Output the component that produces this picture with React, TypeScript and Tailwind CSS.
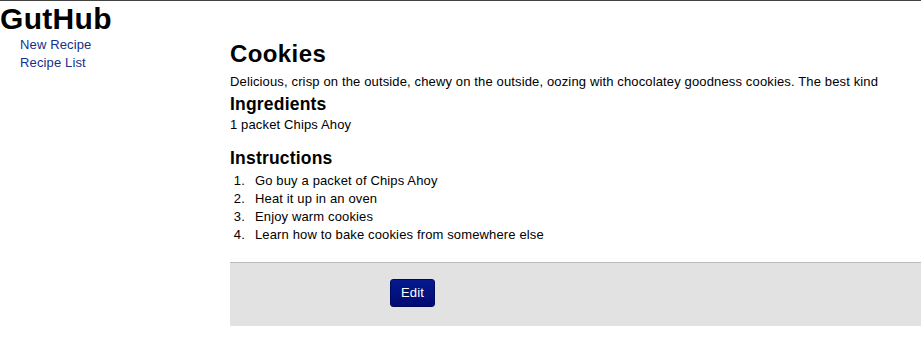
export default function App() {
  const steps = [
    'Go buy a packet of Chips Ahoy',
    'Heat it up in an oven',
    'Enjoy warm cookies',
    'Learn how to bake cookies from somewhere else',
  ];

  return (
    <div className="min-h-screen bg-white border-t border-[#444] font-['Liberation_Sans',Arial,sans-serif] text-[13px] tracking-[0.14px] text-black">
      <h1 className="text-[30px] font-bold leading-[35px] tracking-[0.3px]">GutHub</h1>

      <div className="flex">
        {/* sidebar */}
        <ul className="w-[230px] shrink-0 pl-[20px]">
          <li className="leading-[18px]">
            <a href="#" className="text-[#14308a]">New Recipe</a>
          </li>
          <li className="leading-[18px]">
            <a href="#" className="text-[#14308a]">Recipe List</a>
          </li>
        </ul>

        {/* recipe */}
        <div className="flex-1">
          <h2 className="mt-[4px] text-[24px] font-bold leading-[28px] tracking-[0.4px]">Cookies</h2>
          <p className="mt-[5px] leading-[18px]">
            Delicious, crisp on the outside, chewy on the outside, oozing with chocolatey goodness cookies. The best kind
          </p>

          <h3 className="mt-[2px] text-[17.5px] font-bold leading-[23px] tracking-[0.2px]">Ingredients</h3>
          <ul className="leading-[18px]">
            <li>1 packet Chips Ahoy</li>
          </ul>

          <h3 className="mt-[13px] text-[17.5px] font-bold leading-[23px] tracking-[0.2px]">Instructions</h3>
          <ol className="mt-[2px] leading-[18px]">
            {steps.map((s, i) => (
              <li key={s} className="flex">
                <span className="w-[25px] shrink-0 pr-[10px] text-right">{i + 1}.</span>
                <span>{s}</span>
              </li>
            ))}
          </ol>

          <div className="mt-[18px] h-[64px] border-t border-[#bbbbbb] bg-[#e2e2e2] pt-[16px] pl-[160px]">
            <button className="flex h-[28px] w-[45px] items-center justify-center rounded-[3px] border border-[#000a5c] bg-gradient-to-b from-[#061a8e] to-[#000a72] text-white">
              Edit
            </button>
          </div>
        </div>
      </div>
    </div>
  );
}
